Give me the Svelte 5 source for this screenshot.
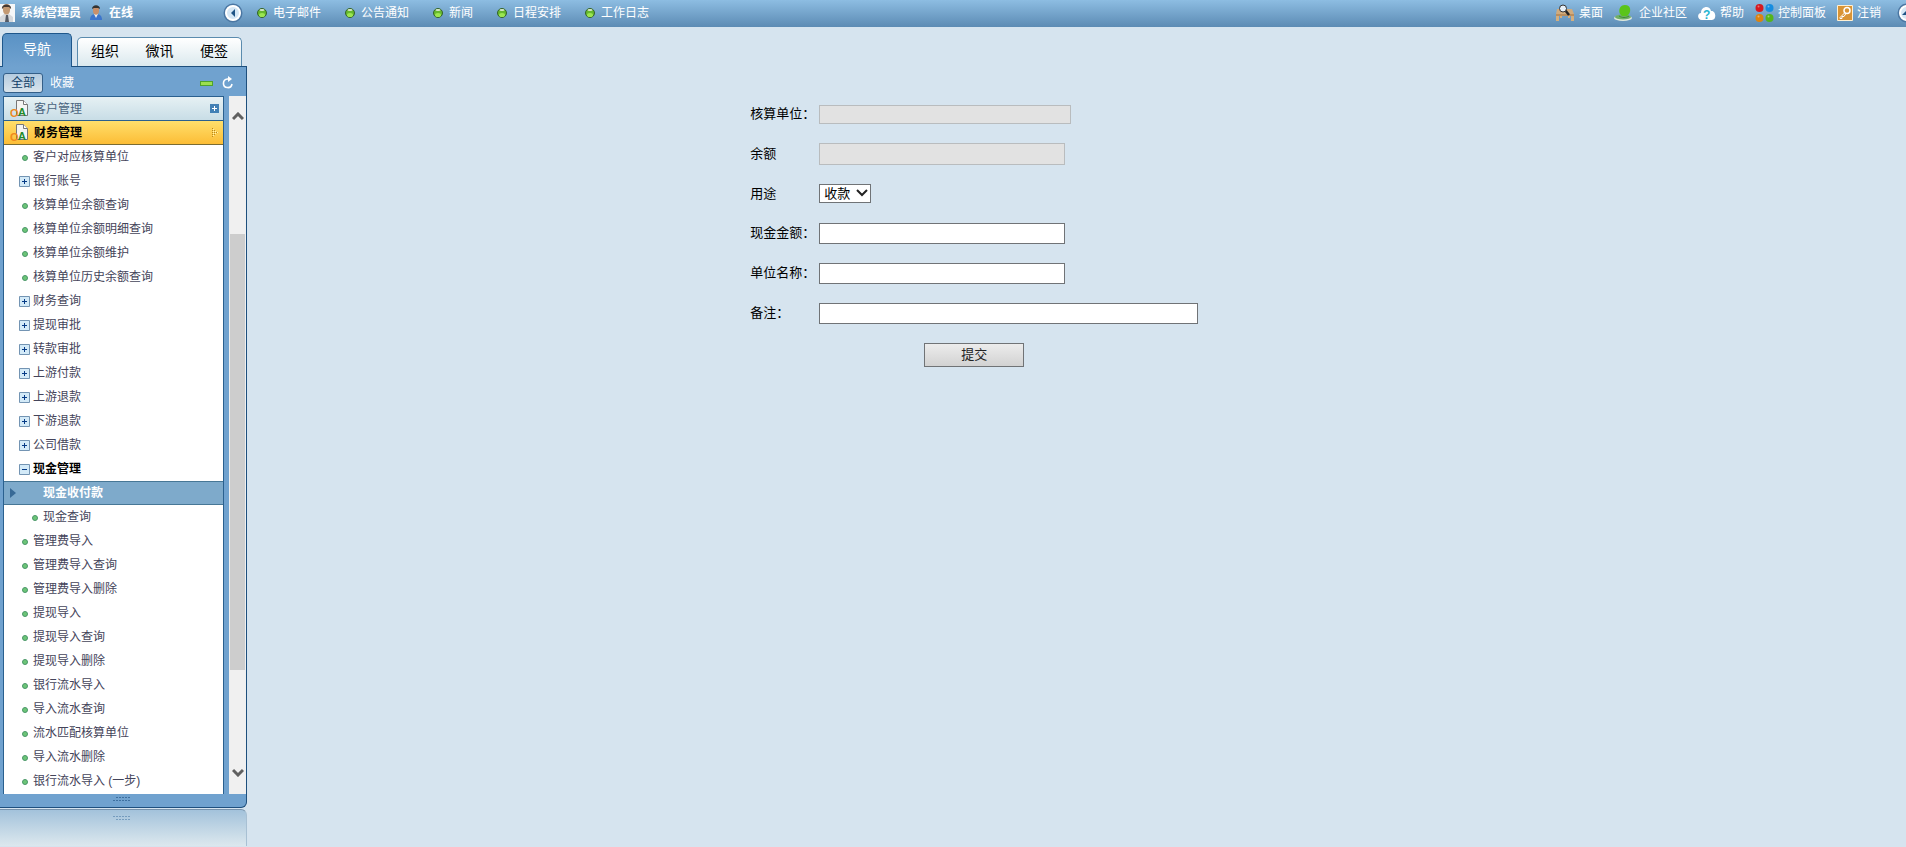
<script>
	const shortcuts = ['电子邮件', '公告通知', '新闻', '日程安排', '工作日志'];
	const tools = [
		{ icon: 'desk', width: 20, label: '桌面' },
		{ icon: 'hat', width: 21, label: '企业社区' },
		{ icon: 'cloud', width: 18, label: '帮助' },
		{ icon: 'balls', width: 19, label: '控制面板' },
		{ icon: 'key', width: 16, label: '注销' }
	];
	const menu = [
		{ label: '客户对应核算单位' },
		{ label: '银行账号', type: 'plus' },
		{ label: '核算单位余额查询' },
		{ label: '核算单位余额明细查询' },
		{ label: '核算单位余额维护' },
		{ label: '核算单位历史余额查询' },
		{ label: '财务查询', type: 'plus' },
		{ label: '提现审批', type: 'plus' },
		{ label: '转款审批', type: 'plus' },
		{ label: '上游付款', type: 'plus' },
		{ label: '上游退款', type: 'plus' },
		{ label: '下游退款', type: 'plus' },
		{ label: '公司借款', type: 'plus' },
		{ label: '现金管理', type: 'minus' },
		{ label: '现金收付款', type: 'active', sub: true },
		{ label: '现金查询', sub: true },
		{ label: '管理费导入' },
		{ label: '管理费导入查询' },
		{ label: '管理费导入删除' },
		{ label: '提现导入' },
		{ label: '提现导入查询' },
		{ label: '提现导入删除' },
		{ label: '银行流水导入' },
		{ label: '导入流水查询' },
		{ label: '流水匹配核算单位' },
		{ label: '导入流水删除' },
		{ label: '银行流水导入 (一步)' }
	];
	let purpose = $state('收款');
</script>

{#snippet oaIcon()}
	<svg class="oa" width="19" height="18" viewBox="0 0 19 18">
		<path d="M6.500 .500h7l4 4v11h-11z" fill="#f4f4f2" stroke="#777" />
		<path d="M13.500 .500v4h4" fill="#fff" stroke="#777" />
		<text x="0" y="17" fill="#ef8a1d">O</text>
		<text x="8" y="16" fill="#1f8a2a">A</text>
	</svg>
{/snippet}

<header>
	<div class="user">
		<svg width="15" height="18" viewBox="0 0 15 18">
			<path d="M0 0h15v18H0z" fill="#f5f7f8" />
			<path d="M0 18v-5l4-3h5l4 3v5z" fill="#d5d8dc" />
			<path d="M3 3c0-4 7-4 7 0v3c0 6-7 6-7 0z" fill="#c39a74" />
			<path d="M2 5c-1-6 10-6 9 0l-2-2H4z" fill="#463a33" />
			<path d="M6 11h2l1 7H5z" fill="#555b66" />
		</svg>
		<b>系统管理员</b>
		<svg class="person" width="14" height="16" viewBox="0 0 14 16">
			<path d="M1 15c0-4 2-6 6-6s6 2 6 6z" fill="#3c75cc" />
			<path d="M5 9h4l-2 4z" fill="#eee" />
			<path d="M4 4c0-4 6-4 6 0v2c0 5-6 5-6 0z" fill="#c8906b" />
			<path d="M3 4c0-5 8-5 8 0L9 3H5z" fill="#333" />
		</svg>
		<b>在线</b>
	</div>
	<button class="round" aria-label="收起">
		<svg width="20" height="20" viewBox="0 0 20 20">
			<circle cx="10" cy="10" r="8.500" fill="#d5e7f5" stroke="#4b77a3" stroke-width="2" />
			<circle cx="10" cy="10" r="7" fill="none" stroke="#fff" stroke-width="2" />
			<path d="M12 6v8l-4-4z" fill="#1f5485" />
		</svg>
	</button>
	<nav class="shortcuts">
		{#each shortcuts as label}
			<a href="#top">
				<svg width="10" height="12" viewBox="0 0 10 12">
					<circle cx="5" cy="6" r="4.500" fill="#66b82e" stroke="#33612d" />
					<ellipse cx="5" cy="3" rx="2.500" ry="1" fill="#d9e6cd" />
					<ellipse cx="5" cy="8" rx="3" ry="2" fill="#9be651" />
				</svg>
				{label}
			</a>
		{/each}
	</nav>
	<nav class="tools">
		{#each tools as tool}
			<a href="#top">
				<svg width={tool.width} height="18" viewBox="0 0 {tool.width} 18">
					{#if tool.icon == 'desk'}
						<path d="M2 5h15l2 5H1z" fill="#d0ab7d" />
						<path d="M1 10h18v2H1z" fill="#b98e5e" />
						<path d="M1 12h3v5H1zM16 12h3v5h-3zM5 12h2v2H5zM13 12h2v2h-2z" fill="#d3ae7e" />
						<path d="M10 6l4 5" stroke="#222" stroke-width="2.500" />
						<circle cx="8" cy="4.500" r="3.500" fill="#e8f1f8" stroke="#333" />
					{:else if tool.icon == 'hat'}
						<ellipse cx="9" cy="14" rx="9" ry="3" fill="#dfe9dc" />
						<ellipse cx="9" cy="13" rx="8" ry="2.500" fill="#6fae66" />
						<path d="M8 12l-2-2c-2-4 0-9 5-9 6 0 6 6 4 9l-2 2z" fill="#5ac41a" />
						<path d="M5 12c3 2 7 2 10 0" stroke="#3a8f30" fill="none" />
					{:else if tool.icon == 'cloud'}
						<path d="M4 16C-1 16-1 9 3 9 3 2 12 1 13 7c5-1 6 9 1 9z" fill="#fff" />
						<text x="5" y="15" fill="#27b5d2">?</text>
					{:else if tool.icon == 'balls'}
						<circle cx="4.500" cy="4" r="4" fill="#d51920" />
						<circle cx="14.500" cy="4" r="4" fill="#168de0" />
						<circle cx="4.500" cy="14" r="4" fill="#dc8310" />
						<circle cx="14.500" cy="14" r="4" fill="#54b51c" />
						<g fill="#fff" opacity=".4">
							<circle cx="3.500" cy="2.500" r="1" />
							<circle cx="13.500" cy="2.500" r="1" />
							<circle cx="3.500" cy="12.500" r="1" />
							<circle cx="13.500" cy="12.500" r="1" />
						</g>
					{:else}
						<path d="M.500 1.500h15v15H.500z" fill="#d99435" stroke="#fff0d3" />
						<circle cx="10" cy="6.500" r="3" fill="none" stroke="#fff" stroke-width="1.500" />
						<path d="M8 8.500l-5 5v1h2v-2h2l2-3" fill="none" stroke="#fff" />
					{/if}
				</svg>
				{tool.label}
			</a>
		{/each}
		<button class="round" aria-label="隐藏">
			<svg width="20" height="20" viewBox="0 0 20 20">
				<circle cx="10" cy="10" r="8.500" fill="#d5e7f5" stroke="#4b77a3" stroke-width="2" />
				<circle cx="10" cy="10" r="7" fill="none" stroke="#fff" stroke-width="2" />
				<path d="M5 12h10l-5-5z" fill="#1f5485" />
			</svg>
		</button>
	</nav>
</header>

<div class="page">
	<aside>
		<div class="tabs">
			<button class="tab current">导航</button>
			<div class="others">
				<button class="tab">组织</button>
				<button class="tab">微讯</button>
				<button class="tab">便签</button>
			</div>
		</div>
		<div class="panel">
			<div class="bar">
				<button class="all">全部</button>
				<button class="fav">收藏</button>
				<button class="collapse" aria-label="折叠"></button>
				<button class="refresh" aria-label="刷新">
					<svg width="12" height="13" viewBox="0 0 12 13">
						<path d="M6.500 3H5.500a4.300 4.300 0 1 0 4.500 5" fill="none" stroke="#fff" stroke-width="1.600" />
						<path d="M6 0l4 3-4 3z" fill="#fff" />
					</svg>
				</button>
			</div>
			<div class="body">
				<div class="menu">
					<button class="group">
						{@render oaIcon()}
						客户管理
						<svg class="mark" width="9" height="9" viewBox="0 0 9 9">
							<path d="M0 0h9v9H0z" fill="#4180b5" />
							<path d="M4.500 2v5M2 4.500h5" stroke="#fff" />
						</svg>
					</button>
					<button class="group open">
						{@render oaIcon()}
						财务管理
						<svg class="mark" width="7" height="9" viewBox="0 0 7 9">
							<path d="M1.500 1v7M3.500 3v4M5.500 4v1" stroke="#fff2b0" stroke-dasharray="1 1" />
							<path d="M.500 0v9M2.500 2v5M4.500 4v1" stroke="#b98a1c" stroke-dasharray="1 1" />
						</svg>
					</button>
					<ul>
						{#each menu as item}
							<li>
								<a href="#top" class={item.type ?? 'leaf'} class:sub={item.sub}>
									{#if item.type == 'active'}
										<svg width="6" height="10" viewBox="0 0 6 10"><path d="M0 0l6 5-6 5z" fill="#386a96" /></svg>
									{:else if item.type}
										<svg width="11" height="11" viewBox="0 0 11 11">
											<path d="M.500 .500h10v10H.500z" fill="#d3eaf8" stroke="#7394b3" />
											<path d="M3 5.500h5" stroke="#063a86" />
											{#if item.type == 'plus'}
												<path d="M5.500 3v5" stroke="#063a86" />
											{/if}
										</svg>
									{:else}
										<svg width="6" height="6" viewBox="0 0 6 6">
											<circle cx="3" cy="3" r="2.500" fill="#6cc577" stroke="#4a9669" />
										</svg>
									{/if}
									<span>{item.label}</span>
								</a>
							</li>
						{/each}
					</ul>
				</div>
				<div class="scroll">
					<svg width="12" height="9" viewBox="0 0 12 9"><path d="M1 7l5-5 5 5" /></svg>
					<div class="thumb"></div>
					<svg width="12" height="9" viewBox="0 0 12 9"><path d="M1 2l5 5 5-5" /></svg>
				</div>
			</div>
			<div class="grip">
				<svg width="17" height="4" viewBox="0 0 17 4"><path d="M3 .500h14M0 3.500h17" /></svg>
			</div>
		</div>
		<div class="mirror">
			<svg width="17" height="4" viewBox="0 0 17 4"><path d="M0 .500h17M3 3.500h14" /></svg>
		</div>
	</aside>

	<main>
		<form onsubmit={(e) => e.preventDefault()}>
			<div class="row">
				<label for="unit">核算单位：</label>
				<input id="unit" class="wide" disabled>
			</div>
			<div class="row">
				<label for="balance">余额</label>
				<input id="balance" class="tall" disabled>
			</div>
			<div class="row short">
				<label for="purpose">用途</label>
				<div class="select">
					<select id="purpose" bind:value={purpose}>
						<option>收款</option>
						<option>付款</option>
					</select>
					<svg width="12" height="8" viewBox="0 0 12 8"><path d="M1 1l5 5 5-5" /></svg>
				</div>
			</div>
			<div class="row">
				<label for="amount">现金金额：</label>
				<input id="amount">
			</div>
			<div class="row">
				<label for="name">单位名称：</label>
				<input id="name">
			</div>
			<div class="row">
				<label for="remark">备注：</label>
				<input id="remark" class="full">
			</div>
			<div class="submit">
				<button>提交</button>
			</div>
		</form>
	</main>
</div>

<style>
	:global(body) {
		background: #d6e4ef;
		font-family: "Liberation Sans", "Noto Sans CJK SC", sans-serif;
		font-size: 12px;
		line-height: 18px;
	}
	button, input, select {
		box-sizing: border-box;
		font: inherit;
		margin: 0;
		padding: 0;
	}
	button {
		background: none;
		border: 0;
		color: inherit;
	}
	a {
		color: inherit;
		text-decoration: none;
	}
	svg {
		display: block;
		flex: none;
	}
	svg text {
		font-size: 12px;
		font-weight: bold;
	}
	.oa text {
		font-size: 11px;
	}
	header {
		display: flex;
		align-items: center;
		height: 27px;
		box-sizing: border-box;
		padding-bottom: 1px;
		overflow: hidden;
		white-space: nowrap;
		color: #fff;
		background: linear-gradient(#8dbde2, #5c8bb4);
	}
	.user {
		display: flex;
		align-items: center;
		gap: 6px;
		width: 223px;
	}
	.person {
		margin-left: 2px;
	}
	.shortcuts {
		display: flex;
		gap: 24px;
		margin-left: 14px;
	}
	.shortcuts a {
		display: flex;
		align-items: center;
		gap: 6px;
	}
	.tools {
		display: flex;
		align-items: center;
		gap: 11px;
		margin-left: auto;
		margin-right: -11px;
	}
	.tools a {
		display: flex;
		align-items: center;
		gap: 4px;
	}
	.tools .round {
		margin-left: 5px;
	}
	.page {
		display: flex;
		gap: 8px;
	}
	aside {
		width: 247px;
		flex: none;
	}
	.tabs {
		display: flex;
		align-items: flex-end;
		gap: 5px;
		height: 39px;
		padding-left: 2px;
	}
	.tab {
		font-size: 14px;
	}
	.current {
		position: relative;
		z-index: 1;
		width: 70px;
		height: 34px;
		margin-bottom: -1px;
		padding-bottom: 3px;
		color: #fff;
		background: linear-gradient(#5a92c5, #70a2cf);
		border: 1px solid #1e578b;
		border-bottom: 0;
		border-radius: 5px 5px 0 0;
	}
	.others {
		display: flex;
		justify-content: space-between;
		box-sizing: border-box;
		width: 165px;
		height: 29px;
		padding: 0 13px 2px;
		background: linear-gradient(#fff, #dbe9ee);
		border: 1px solid #5a8bae;
		border-bottom: 0;
		border-radius: 5px 5px 0 0;
	}
	.panel {
		background: #70a2cf;
		border: 1px solid #1e4f7d;
		border-left: 0;
		border-radius: 0 0 6px 0;
	}
	.bar {
		display: flex;
		align-items: center;
		height: 29px;
		padding: 0 12px 0 3px;
		color: #fff;
	}
	.all {
		width: 40px;
		height: 20px;
		margin-top: 2px;
		line-height: 16px;
		color: #0f3d66;
		background: linear-gradient(#b4cbdf, #d9e4ec);
		border: 1px solid #345f88;
		border-radius: 3px;
	}
	.fav {
		margin: 2px auto 0 7px;
	}
	.collapse {
		width: 13px;
		height: 5px;
		margin: 4px 9px 0 0;
		background: #9cdf50;
		border: 1px solid #4fa32c;
	}
	.refresh {
		margin-top: 2px;
	}
	.body {
		display: flex;
		padding-left: 3px;
	}
	.menu {
		box-sizing: border-box;
		width: 221px;
		margin-right: 5px;
		background: #fff;
		border: 1px solid #2a608f;
		border-bottom: 0;
	}
	.group {
		display: flex;
		align-items: center;
		gap: 5px;
		width: 100%;
		height: 24px;
		padding: 0 4px 0 6px;
		color: #4a6580;
		background: linear-gradient(#e6f1f4, #c8dde6);
		border-bottom: 1px solid #2a608f;
	}
	.open {
		color: #000;
		font-weight: bold;
		background: linear-gradient(#ffdf6b, #fcbd36);
		border-bottom-color: #7b6c32;
	}
	.mark {
		margin-left: auto;
	}
	ul {
		list-style: none;
		margin: 0;
		padding: 0 0 1px;
	}
	li a {
		display: flex;
		align-items: center;
		box-sizing: border-box;
		height: 24px;
		gap: 3px;
		padding-left: 15px;
		color: #44445a;
	}
	.leaf {
		padding-left: 18px;
		gap: 5px;
	}
	.leaf svg {
		margin-top: 2px;
	}
	.sub {
		padding-left: 28px;
	}
	.minus {
		color: #000;
		font-weight: bold;
	}
	.active {
		padding-left: 6px;
		gap: 27px;
		color: #fff;
		font-weight: bold;
		background: #7eaacb;
		border: solid #477796;
		border-width: 1px 0;
	}
	.scroll {
		display: grid;
		grid-template-rows: 138fr 437fr 124fr;
		width: 17px;
		justify-items: center;
		background: #f0f0f0;
	}
	.scroll svg {
		margin: 16px 0;
	}
	.scroll svg:last-child {
		align-self: end;
		margin-bottom: 17px;
	}
	.scroll path {
		fill: none;
		stroke: #606060;
		stroke-width: 3;
	}
	.thumb {
		width: 15px;
		background: #cdcdcd;
	}
	.grip {
		display: flex;
		justify-content: center;
		height: 10px;
		padding: 3px 4px 0 0;
	}
	.grip path, .mirror path {
		stroke: #3d6f9f;
		stroke-dasharray: 2 1;
	}
	.mirror {
		display: flex;
		justify-content: center;
		box-sizing: border-box;
		height: 37px;
		margin-top: 1px;
		padding: 6px 4px 0 0;
		background: linear-gradient(#a3c2db, #dce8ee);
		border-top: 1px solid #7893ac;
		border-right: 1px solid #a8c0d3;
		border-radius: 0 6px 0 0;
	}
	.mirror svg {
		opacity: .5;
	}
	main {
		flex: 1;
	}
	form {
		width: 448px;
		margin: 67px 0 0 30%;
		font-size: 13px;
	}
	.row {
		display: flex;
		align-items: center;
		height: 40px;
	}
	.short {
		height: 39px;
	}
	label {
		width: 69px;
		white-space: nowrap;
	}
	input {
		width: 246px;
		height: 21px;
		background: #fff;
		border: 1px solid #707376;
	}
	input:disabled {
		background: #e2e2e2;
		border-color: #b9bcbe;
	}
	.wide {
		width: 252px;
		height: 19px;
	}
	.tall {
		height: 22px;
	}
	.full {
		width: 379px;
	}
	.select {
		position: relative;
	}
	select {
		appearance: none;
		display: block;
		width: 52px;
		height: 19px;
		padding-left: 4px;
		line-height: 16px;
		color: #000;
		background: #fff;
		border: 1px solid #707376;
		border-radius: 0;
	}
	.select svg {
		position: absolute;
		right: 3px;
		top: 5px;
		pointer-events: none;
	}
	.select path {
		fill: none;
		stroke: #222;
		stroke-width: 2;
	}
	.submit {
		padding-top: 10px;
		text-align: center;
	}
	.submit button {
		width: 100px;
		height: 24px;
		color: #222;
		background: linear-gradient(#ececec, #d2d2d2);
		border: 1px solid #707376;
	}
</style>
